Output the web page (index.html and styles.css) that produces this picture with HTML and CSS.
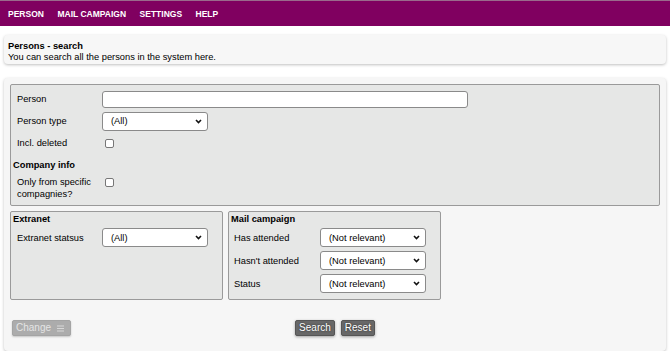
FILE: index.html
```html
<!DOCTYPE html>
<html>
<head>
<meta charset="utf-8">
<link rel="stylesheet" href="styles.css">
</head>
<body>
<nav class="topnav">
  <a class="nav-item">PERSON</a>
  <a class="nav-item">MAIL CAMPAIGN</a>
  <a class="nav-item">SETTINGS</a>
  <a class="nav-item">HELP</a>
</nav>

<section class="intro">
  <div class="intro-title">Persons - search</div>
  <div class="intro-text">You can search all the persons in the system here.</div>
</section>

<section class="panel">
  <div class="box box-main">
    <div class="row">
      <label class="lbl">Person</label>
      <input class="text-input" type="text">
    </div>
    <div class="row">
      <label class="lbl">Person type</label>
      <span class="sel-wrap sel-short">
        <select class="sel"><option>(All)</option></select>
        <svg class="chev" width="7" height="5" viewBox="0 0 7 5"><path d="M1 1 L3.5 3.5 L6 1" fill="none" stroke="#111" stroke-width="1.6"/></svg>
      </span>
    </div>
    <div class="row">
      <label class="lbl">Incl. deleted</label>
      <input class="chk" type="checkbox">
    </div>
    <div class="row heading-row">Company info</div>
    <div class="row row-tall">
      <label class="lbl lbl-multi">Only from specific compagnies?</label>
      <input class="chk chk-top" type="checkbox">
    </div>
  </div>

  <div class="lower">
    <div class="box box-half">
      <div class="box-heading">Extranet</div>
      <div class="srow">
        <label class="lbl">Extranet statsus</label>
        <span class="sel-wrap sel-short">
          <select class="sel"><option>(All)</option></select>
          <svg class="chev" width="7" height="5" viewBox="0 0 7 5"><path d="M1 1 L3.5 3.5 L6 1" fill="none" stroke="#111" stroke-width="1.6"/></svg>
        </span>
      </div>
    </div>
    <div class="box box-half">
      <div class="box-heading">Mail campaign</div>
      <div class="srow">
        <label class="lbl lbl-mail">Has attended</label>
        <span class="sel-wrap sel-short">
          <select class="sel"><option>(Not relevant)</option></select>
          <svg class="chev" width="7" height="5" viewBox="0 0 7 5"><path d="M1 1 L3.5 3.5 L6 1" fill="none" stroke="#111" stroke-width="1.6"/></svg>
        </span>
      </div>
      <div class="srow">
        <label class="lbl lbl-mail">Hasn't attended</label>
        <span class="sel-wrap sel-short">
          <select class="sel"><option>(Not relevant)</option></select>
          <svg class="chev" width="7" height="5" viewBox="0 0 7 5"><path d="M1 1 L3.5 3.5 L6 1" fill="none" stroke="#111" stroke-width="1.6"/></svg>
        </span>
      </div>
      <div class="srow">
        <label class="lbl lbl-mail">Status</label>
        <span class="sel-wrap sel-short">
          <select class="sel"><option>(Not relevant)</option></select>
          <svg class="chev" width="7" height="5" viewBox="0 0 7 5"><path d="M1 1 L3.5 3.5 L6 1" fill="none" stroke="#111" stroke-width="1.6"/></svg>
        </span>
      </div>
    </div>
  </div>

  <div class="actions">
    <div class="actions-left">
      <button class="btn btn-change">Change <svg class="burger" width="7" height="7" viewBox="0 0 7 7"><path d="M0 1 H7 M0 3.5 H7 M0 6 H7" stroke="#d8d8d8" stroke-width="1"/></svg></button>
    </div>
    <div class="actions-center">
      <button class="btn btn-dark">Search</button>
      <button class="btn btn-dark">Reset</button>
    </div>
    <div></div>
  </div>
</section>
</body>
</html>
```

FILE: styles.css
```css
* { box-sizing: border-box; }

body {
  margin: 0;
  background: #ffffff;
  font-family: "Liberation Sans", Arial, sans-serif;
  font-size: 9.3px;
  color: #000;
}

.topnav {
  height: 26px;
  background: #800060;
  border-top: 1px solid #9a6a8c;
  display: flex;
  align-items: center;
  gap: 13.5px;
  padding-left: 8px;
  padding-top: 1px;
}

.nav-item {
  color: #fff;
  font-weight: bold;
  font-size: 8.5px;
  text-decoration: none;
}

.intro {
  margin: 9px 4px 0;
  height: 29px;
  padding: 6px 4px 0;
  background: #f7f7f7;
  border-radius: 4px;
  box-shadow: 0 1px 3px rgba(0, 0, 0, 0.25);
  line-height: 10.5px;
}

.intro-title { font-weight: bold; }

.panel {
  margin: 14px 4px 0;
  padding: 6px 6px 15px;
  background: #f6f6f6;
  border-radius: 4px;
  box-shadow: 0 1px 3px rgba(0, 0, 0, 0.25);
}

.box {
  border: 1px solid #9a9a9a;
  border-radius: 2px;
  background: #e6e7e6;
  padding: 0 2px;
}

.box-main {
  padding-top: 3px;
  padding-bottom: 5px;
}

.row {
  display: flex;
  align-items: center;
  height: 22px;
}

.row-tall {
  height: auto;
  align-items: flex-start;
}

.heading-row {
  font-weight: bold;
}

.lbl {
  width: 89px;
  flex: none;
  padding-left: 4px;
}

.lbl-multi {
  line-height: 12px;
  padding-right: 10px;
}

.lbl-mail {
  padding-left: 3px;
}

.text-input {
  width: 366px;
  height: 17px;
  border: 1px solid #8a8a8a;
  border-radius: 3px;
  background: #fff;
  padding: 0 4px;
  font: inherit;
  margin: 0;
}

.chk {
  appearance: none;
  -webkit-appearance: none;
  width: 9px;
  height: 9px;
  margin: 0 0 0 3px;
  border: 1px solid #777;
  border-radius: 2px;
  background: #fff;
}

.chk-top { margin-top: 2px; }

.sel-wrap {
  position: relative;
  display: inline-block;
}

.sel-short { width: 106px; height: 19px; }

.sel {
  appearance: none;
  -webkit-appearance: none;
  width: 100%;
  height: 100%;
  border: 1px solid #8a8a8a;
  border-radius: 3px;
  background: #fff;
  font: inherit;
  color: #000;
  padding: 0 0 0 8px;
  margin: 0;
}

.chev {
  position: absolute;
  right: 6px;
  top: 7px;
  pointer-events: none;
}

.lower {
  display: flex;
  gap: 5px;
  margin-top: 5px;
}

.box-half {
  width: 213px;
  padding-bottom: 6px;
}

.box-heading {
  font-weight: bold;
  height: 14px;
  line-height: 14px;
  margin-bottom: 2px;
}

.srow {
  display: flex;
  align-items: center;
  height: 19px;
  margin-bottom: 4px;
}

.srow:last-child { margin-bottom: 0; }

.actions {
  display: grid;
  grid-template-columns: 1fr auto 1fr;
  align-items: center;
  margin-top: 20px;
}

.actions-left { padding-left: 2px; }

.actions-center {
  display: flex;
  gap: 6px;
}

.btn {
  font-family: "Liberation Sans", Arial, sans-serif;
  font-size: 10px;
  height: 16px;
  line-height: 14px;
  padding: 0 3px;
  border-radius: 2px;
  margin: 0;
  cursor: pointer;
}

.btn-change {
  width: 59px;
  text-align: left;
  background: #acacac;
  color: #e4e4e4;
  border: 1px solid #a4a4a4;
  box-shadow: 0 1px 2px rgba(0, 0, 0, 0.2);
  display: flex;
  align-items: center;
  justify-content: space-between;
  padding: 0 6px 0 3px;
}

.burger {
  flex: none;
}

.btn-dark {
  background: #686868;
  color: #fff;
  border: 1px solid #555;
  text-shadow: 0 0 2px #222;
  box-shadow: 0 1px 3px rgba(0, 0, 0, 0.35);
}
```
